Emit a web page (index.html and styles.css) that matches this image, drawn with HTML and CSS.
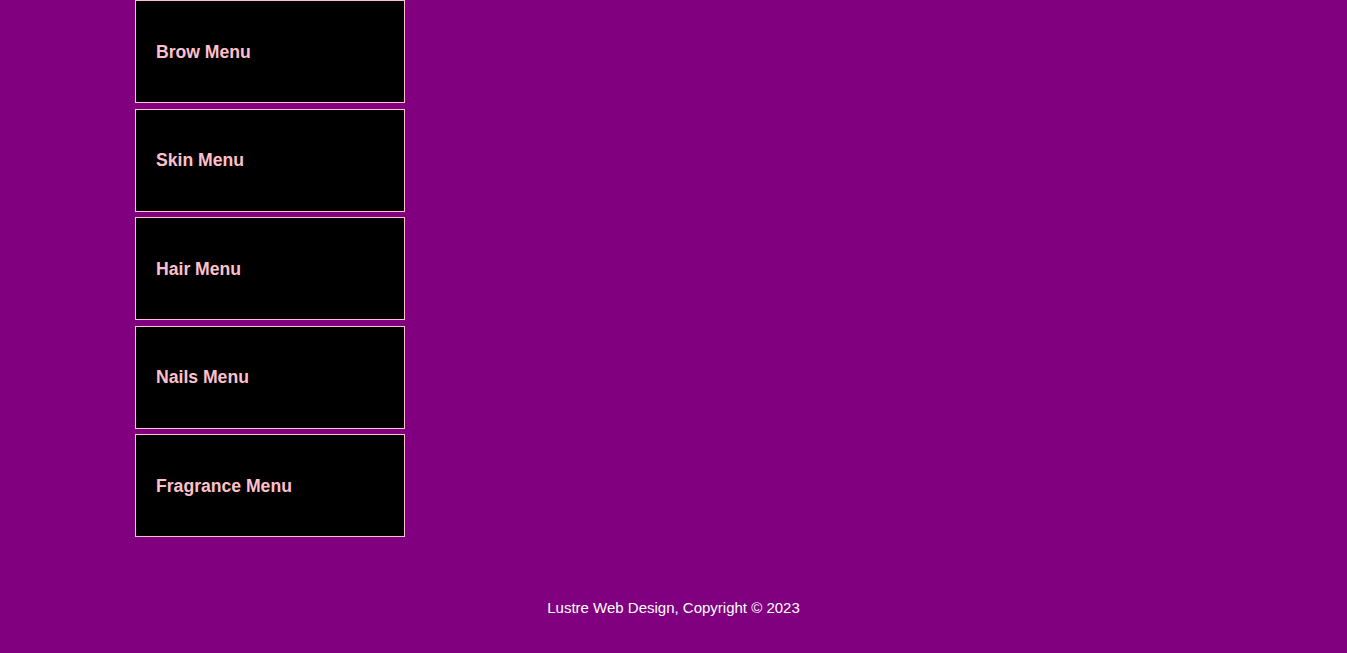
FILE: index.html
```html
<!DOCTYPE html>
<html>
<head>
<meta charset="utf-8">
<link rel="stylesheet" href="styles.css">
</head>
<body>
<main class="menus">
  <a class="menu-card" href="#">Brow Menu</a>
  <a class="menu-card" href="#">Skin Menu</a>
  <a class="menu-card" href="#">Hair Menu</a>
  <a class="menu-card" href="#">Nails Menu</a>
  <a class="menu-card" href="#">Fragrance Menu</a>
</main>
<footer class="footer">Lustre Web Design, Copyright © 2023</footer>
</body>
</html>
```
FILE: styles.css
```css
html, body {
  margin: 0;
  padding: 0;
  background: #800080;
  font-family: "Liberation Sans", Arial, sans-serif;
}
.menus {
  display: flex;
  flex-direction: column;
  gap: 5.5px;
  padding-left: 135px;
}
.menu-card {
  box-sizing: border-box;
  width: 270px;
  height: 103px;
  border: 1px solid #ffc0cb;
  background: #000;
  color: #ffc0cb;
  text-decoration: none;
  font-weight: bold;
  font-size: 17.6px;
  display: flex;
  align-items: center;
  padding-left: 20px;
  padding-top: 1px;
}
.footer {
  color: #fff;
  text-align: center;
  font-size: 15px;
  margin-top: 62px;
}
```
